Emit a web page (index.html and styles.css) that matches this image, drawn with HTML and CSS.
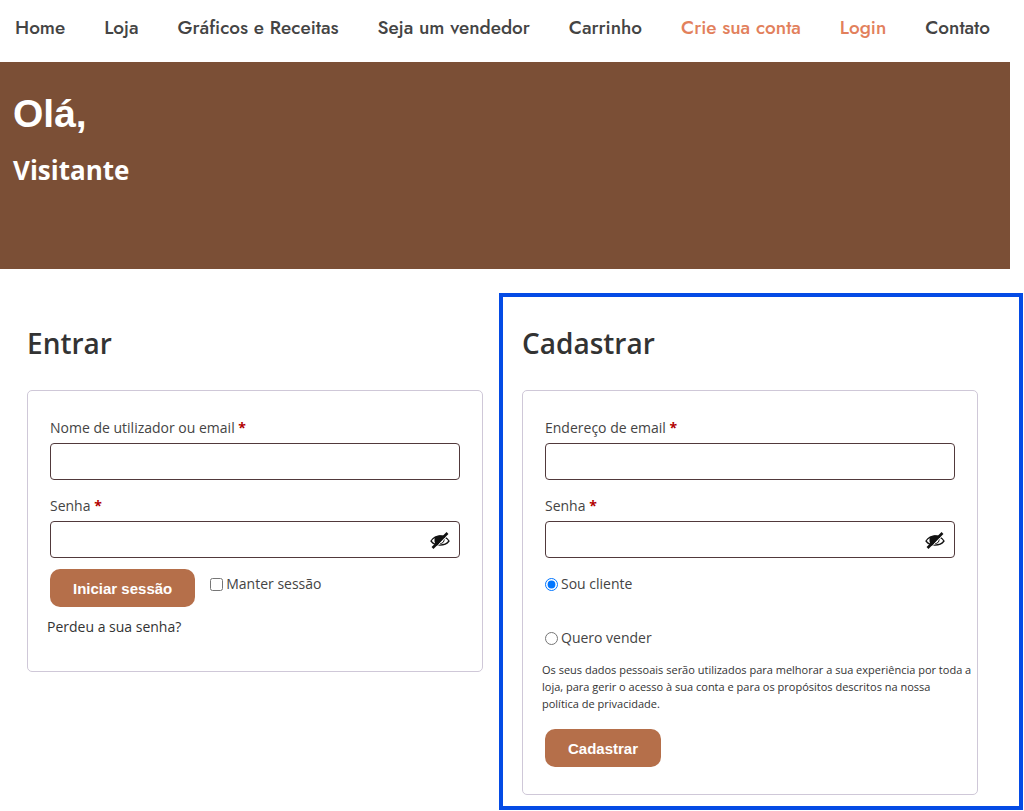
FILE: index.html
```html
<!DOCTYPE html>
<html lang="pt">
<head>
    <meta charset="UTF-8">
    <meta name="viewport" content="width=device-width, initial-scale=1.0">
    <title>Minha conta</title>
    <link rel="stylesheet" href="styles.css">
</head>
<body>

<nav class="menu">
    <a href="#">Home</a>
    <a href="#">Loja</a>
    <a href="#">Gráficos e Receitas</a>
    <a href="#">Seja um vendedor</a>
    <a href="#">Carrinho</a>
    <a href="#cadastrar" class="active">Crie sua conta</a>
    <a href="#entrar" class="active">Login</a>
    <a href="#">Contato</a>
</nav>

<header class="banner">
    <h1>Olá,</h1>
    <p>Visitante</p>
</header>

<main class="account">
    <section class="column" id="entrar">
        <h2>Entrar</h2>
        <form class="card">
            <div class="field">
                <label for="username">Nome de utilizador ou email <span class="required">*</span></label>
                <input type="text" id="username">
            </div>
            <div class="field">
                <label for="password">Senha <span class="required">*</span></label>
                <div class="password">
                    <input type="password" id="password">
                    <button type="button" class="show-password" aria-label="Mostrar senha">
                        <svg viewBox="0 0 20 18" width="20" height="18">
                            <path d="M1 10C5 3.500 15 3.500 19 10C15 15.500 5 15.500 1 10Z" fill="none" stroke="#111" stroke-width="1.300"/>
                            <path d="M5 6C8 4 12 4 15 5L7 15C4 12 4 9 5 6Z" fill="#111"/>
                            <path d="M14 8C14.500 11 12.500 12.500 10 12.500" fill="none" stroke="#111" stroke-width="1"/>
                            <path d="M4.500 18L18.500 3.500" stroke="#fff" stroke-width="1"/>
                            <path d="M2.500 17L17.500 2" stroke="#111" stroke-width="2.600"/>
                        </svg>
                    </button>
                </div>
            </div>
            <div class="actions">
                <button type="submit" class="btn">Iniciar sessão</button>
                <label class="option"><input type="checkbox"> Manter sessão</label>
            </div>
            <p class="lost"><a href="#">Perdeu a sua senha?</a></p>
        </form>
    </section>

    <section class="column highlight" id="cadastrar">
        <h2>Cadastrar</h2>
        <form class="card">
            <div class="field">
                <label for="reg-email">Endereço de email <span class="required">*</span></label>
                <input type="email" id="reg-email">
            </div>
            <div class="field">
                <label for="reg-password">Senha <span class="required">*</span></label>
                <div class="password">
                    <input type="password" id="reg-password">
                    <button type="button" class="show-password" aria-label="Mostrar senha">
                        <svg viewBox="0 0 20 18" width="20" height="18">
                            <path d="M1 10C5 3.500 15 3.500 19 10C15 15.500 5 15.500 1 10Z" fill="none" stroke="#111" stroke-width="1.300"/>
                            <path d="M5 6C8 4 12 4 15 5L7 15C4 12 4 9 5 6Z" fill="#111"/>
                            <path d="M14 8C14.500 11 12.500 12.500 10 12.500" fill="none" stroke="#111" stroke-width="1"/>
                            <path d="M4.500 18L18.500 3.500" stroke="#fff" stroke-width="1"/>
                            <path d="M2.500 17L17.500 2" stroke="#111" stroke-width="2.600"/>
                        </svg>
                    </button>
                </div>
            </div>
            <div class="roles">
                <label class="option"><input type="radio" name="role" checked> Sou cliente</label>
                <label class="option"><input type="radio" name="role"> Quero vender</label>
            </div>
            <p class="privacy">Os seus dados pessoais serão utilizados para melhorar a sua experiência por toda a loja, para gerir o acesso à sua conta e para os propósitos descritos na nossa <a href="#">política de privacidade.</a></p>
            <button type="submit" class="btn">Cadastrar</button>
        </form>
    </section>
</main>

</body>
</html>
```
FILE: styles.css
```css
* {
    box-sizing: border-box;
}

body {
    margin: 0;
    background-color: #fff;
    color: #444;
    font-family: "Segoe UI", "Open Sans", sans-serif;
    font-size: 14px;
    line-height: 24px;
}

h1, h2, p {
    margin: 0;
}

a {
    color: inherit;
    text-decoration: none;
}

/* Top menu */
.menu {
    display: flex;
    justify-content: space-between;
    padding: 16px 34px 22px 15px;
    font-family: Jost, Lato, sans-serif;
    font-size: 19px;
    font-weight: 500;
    white-space: nowrap;
}

.menu .active {
    color: #e2805c;
}

.banner {
    min-height: 207px;
    margin-right: 14px;
    padding: 28px 13px;
    background-color: #7b4f36;
    color: #fff;
    font-weight: bold;
}

.banner h1 {
    font-family: "Liberation Sans", Arial, sans-serif;
    font-size: 39px;
    line-height: 48px;
}

.banner p {
    margin-top: 12px;
    font-size: 26px;
    line-height: 40px;
}

/* Login and register columns */
.account {
    display: flex;
    align-items: flex-start;
    gap: 16px;
    margin: 24px 1px 1px 27px;
}

.column {
    box-sizing: content-box;
    flex: 1 1 0;
    min-width: 0;
    padding-top: 30px;
}

.highlight {
    padding: 26px 41px 11px 19px;
    border: 4px solid #044be5;
}

.column h2 {
    margin-bottom: 27px;
    color: #333;
    font-size: 28px;
    font-weight: 600;
    line-height: 40px;
}

.card {
    padding: 25px 22px 27px;
    border: 1px solid #cfc8d8;
    border-radius: 5px;
}

.field {
    margin-bottom: 14px;
}

.field label {
    display: block;
    margin-bottom: 3px;
}

.field input {
    display: block;
    width: 100%;
    height: 37px;
    padding: 0 12px;
    border: 1px solid #51393b;
    border-radius: 4px;
    background-color: #fff;
    font: inherit;
}

.required {
    color: #b20000;
    font-weight: bold;
}

.password {
    position: relative;
}

.show-password {
    position: absolute;
    top: 10px;
    right: 10px;
    padding: 0;
    border: 0;
    background: none;
    line-height: 0;
    cursor: pointer;
}

.actions {
    display: flex;
    gap: 15px;
    margin-top: -3px;
}

.btn {
    height: 38px;
    padding: 0 23px;
    border: 0;
    border-radius: 10px;
    background-color: #b56f4a;
    color: #fff;
    font-family: "Liberation Sans", Arial, sans-serif;
    font-size: 15px;
    font-weight: bold;
    cursor: pointer;
}

.option {
    display: flex;
    align-items: center;
    gap: 3px;
    height: 30px;
}

.option input {
    margin: 0;
}

.lost {
    margin: 8px -3px 5px;
    color: #333;
}

.roles {
    display: grid;
    justify-items: start;
    gap: 24px;
    margin-top: -3px;
}

.privacy {
    margin: 8px -18px 17px -3px;
    color: #333;
    font-size: 11px;
    line-height: 17px;
}

.privacy a {
    white-space: nowrap;
}
```
